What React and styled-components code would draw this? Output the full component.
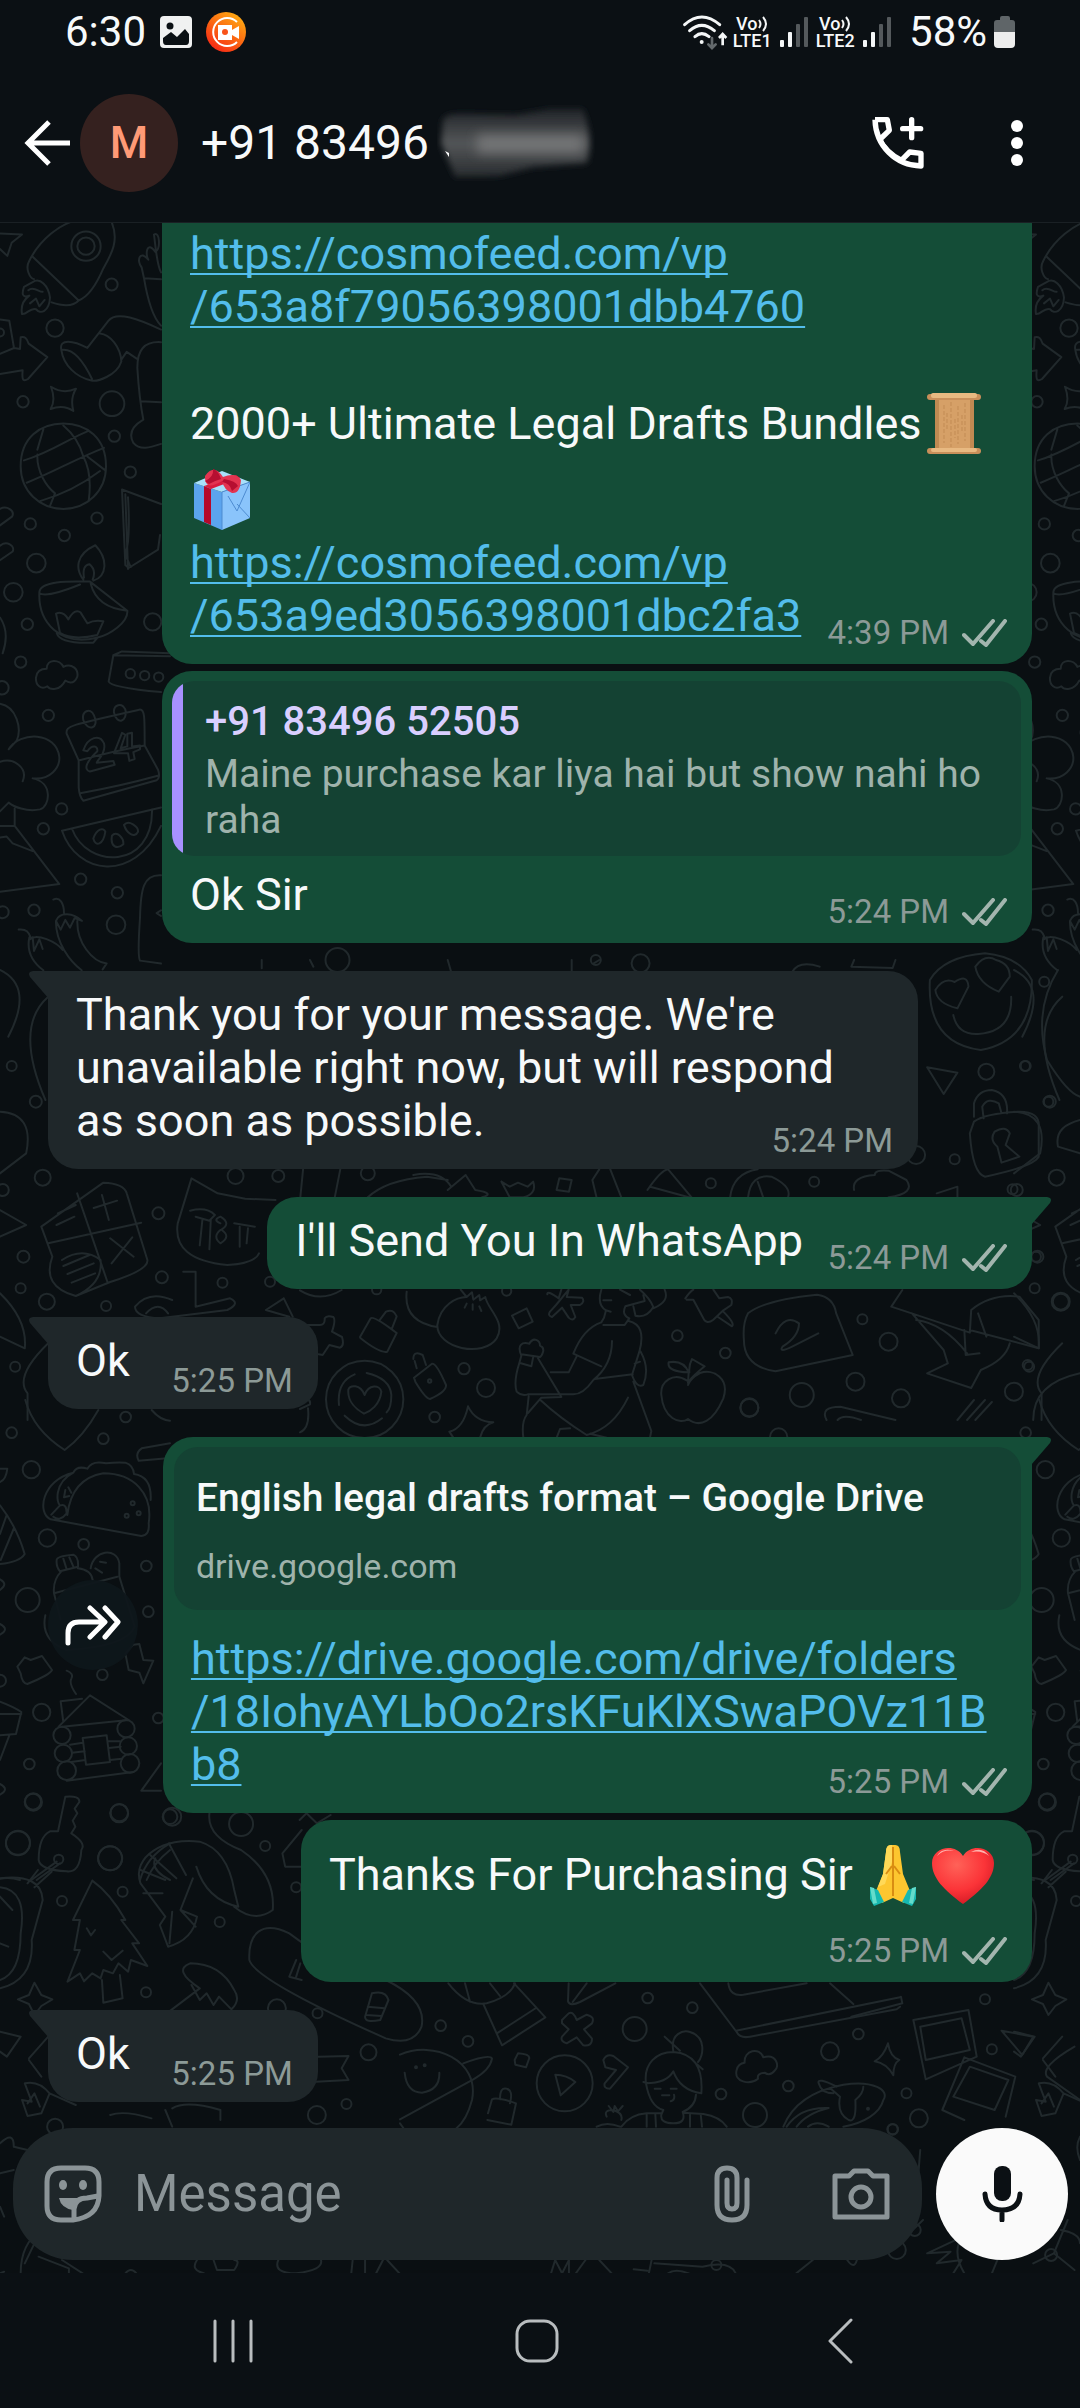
import React from "react";
import styled, { createGlobalStyle } from "styled-components";

const GlobalStyle = createGlobalStyle`
  *, *::before, *::after { box-sizing: border-box; }
  body { margin: 0; background: #0b1014; }
  button { border: 0; padding: 0; background: none; color: inherit; font: inherit; cursor: pointer; }
  svg { display: block; flex: none; }
`;

const Screen = styled.div`
  display: flex;
  flex-direction: column;
  min-height: 100vh;
  background: #0b1014;
  color: #f7f9fa;
  font-family: Roboto, "Liberation Sans", sans-serif;
`;

/* ---------- status bar ---------- */

const StatusBar = styled.div`
  display: flex;
  align-items: center;
  justify-content: space-between;
  height: 64px;
  padding: 0 65px;
  font-size: 42px;
  line-height: 48px;
`;

const StatusGroup = styled.div`
  display: flex;
  align-items: center;
  gap: ${(p) => p.$gap}px;
`;

const Carrier = styled.div`
  display: flex;
  flex-direction: column;
  align-items: center;
  font-size: 18px;
  font-weight: 500;
  line-height: 17px;
`;

const CarrierTop = styled.span`
  display: flex;
  align-items: center;
  gap: 1px;
`;

/* ---------- chat header ---------- */

const Header = styled.header`
  display: flex;
  align-items: center;
  height: 159px;
  padding: 0 55px 0 22px;
  border-bottom: 1px solid #1a2024;
`;

const IconButton = styled.button`
  display: flex;
  align-items: center;
  justify-content: center;
  width: ${(p) => p.$w || 60}px;
  height: ${(p) => p.$h || 80}px;
  flex: none;
`;

const Avatar = styled.div`
  display: flex;
  align-items: center;
  justify-content: center;
  width: 98px;
  height: 98px;
  margin-left: 8px;
  border-radius: 50%;
  background: #35211f;
  color: #ff9a76;
  font-size: 44px;
  font-weight: 500;
`;

const ContactName = styled.h1`
  display: flex;
  align-items: center;
  flex: 1;
  gap: 8px;
  margin: 0 0 0 23px;
  font-size: 48px;
  font-weight: 400;
  line-height: 56px;
  white-space: nowrap;
`;

const HeaderActions = styled.div`
  display: flex;
  align-items: center;
  gap: 81px;
`;

/* ---------- conversation ---------- */

const Chat = styled.main`
  position: relative;
  display: flex;
  flex: 1;
  flex-direction: column;
  justify-content: space-between;
  overflow: hidden;
  background: #0a0f12;
`;

const WallpaperSvg = styled.svg`
  position: absolute;
  inset: 0;
  width: 100%;
  height: 100%;
  fill: none;
  stroke: #21292c;
  stroke-width: 2;
  stroke-linecap: round;
  stroke-linejoin: round;
`;

const Messages = styled.div`
  position: relative;
  display: flex;
  flex-direction: column;
  padding: 0 48px 24px;
`;

const Row = styled.div`
  display: flex;
  align-items: center;
  justify-content: ${(p) => (p.$out ? "flex-end" : "flex-start")};
  gap: 25px;
  margin-top: ${(p) => p.$space}px;
`;

const Bubble = styled.article`
  position: relative;
  display: flex;
  flex-direction: column;
  width: ${(p) => (p.$wide ? "calc(100% - 114px)" : "auto")};
  max-width: calc(100% - 114px);
  padding: ${(p) => (p.$rich ? 10 : p.$cut ? 4 : 17)}px 0 ${(p) => (p.$out ? 11 : 8)}px;
  border-radius: ${(p) => (p.$cut ? "0 0 30px 30px" : "30px")};
  ${(p) => p.$tail && (p.$out ? "border-top-right-radius: 0;" : "border-top-left-radius: 0;")}
  background: ${(p) => (p.$out ? "#144d37" : "#1f272a")};
`;

const TailSvg = styled.svg`
  position: absolute;
  top: 0;
  ${(p) => (p.$out ? "right: -19px; transform: scaleX(-1);" : "left: -19px;")}
  fill: ${(p) => (p.$out ? "#144d37" : "#1f272a")};
`;

const Text = styled.p`
  margin: ${(p) => p.$top || 0}px 28px 0;
  font-size: 45px;
  line-height: 53px;
`;

const EmojiLine = styled.span`
  display: block;
  line-height: 75px;
  white-space: ${(p) => (p.$nowrap ? "nowrap" : "normal")};

  svg {
    display: inline-block;
    margin: 0 ${(p) => p.$edge || 0}px 0 4px;
    vertical-align: -16px;
  }
`;

const MetaSpace = styled.span`
  display: inline-block;
  width: ${(p) => (p.$out ? 201 : 160)}px;
`;

const Link = styled.a`
  color: #53bdeb;
  text-decoration: underline;
  text-decoration-thickness: 2px;
  text-underline-offset: 4px;
  text-decoration-skip-ink: none;
`;

const Meta = styled.footer`
  display: flex;
  align-items: center;
  justify-content: flex-end;
  gap: 13px;
  margin-top: ${(p) => (p.$below ? 19 : p.$out ? -29 : -26)}px;
  padding-right: 25px;
  color: #8c9a97;
  font-size: 33px;
  line-height: 40px;
`;

const Quote = styled.blockquote`
  margin: 0 11px 0 10px;
  padding: 17px 24px 13px 33px;
  border-radius: 22px;
  background: linear-gradient(to right, #a791ff 11px, #144233 11px);
`;

const QuoteName = styled.div`
  color: #d9cfff;
  font-size: 40px;
  font-weight: 500;
  line-height: 47px;
`;

const QuoteText = styled.p`
  margin: 6px 0 0;
  color: #9fb3ac;
  font-size: 39px;
  line-height: 46px;
`;

const Preview = styled.div`
  margin: 0 11px;
  padding: 28px 22px 24px;
  border-radius: 24px;
  background: #144233;
`;

const PreviewTitle = styled.div`
  font-size: 39px;
  font-weight: 500;
  line-height: 46px;
`;

const PreviewHost = styled.div`
  margin-top: 25px;
  color: #9fb3ac;
  font-size: 34px;
  line-height: 40px;
`;

const ForwardButton = styled.button`
  display: flex;
  align-items: center;
  justify-content: center;
  width: 90px;
  height: 90px;
  border-radius: 50%;
  background: #0e161bee;
`;

/* ---------- composer ---------- */

const Composer = styled.form`
  position: relative;
  display: flex;
  gap: 14px;
  margin: 0;
  padding: 0 12px 13px 13px;
`;

const Field = styled.div`
  display: flex;
  flex: 1;
  align-items: center;
  min-width: 0;
  height: 132px;
  padding: 0 31px 0 30px;
  border-radius: 60px;
  background: #1f272a;
  color: #8b9497;
`;

const MessageInput = styled.input`
  flex: 1;
  min-width: 0;
  margin: 0 0 0 31px;
  padding: 0;
  border: 0;
  outline: 0;
  background: transparent;
  color: #f7f9fa;
  font-family: inherit;
  font-size: 51px;
  line-height: 60px;

  &::placeholder { color: #8b9497; opacity: 1; }
`;

const FieldActions = styled.div`
  display: flex;
  align-items: center;
  gap: 69px;
`;

const MicButton = styled.button`
  display: flex;
  align-items: center;
  justify-content: center;
  width: 132px;
  height: 132px;
  border-radius: 50%;
  background: #fafafa;
`;

/* ---------- system navigation ---------- */

const NavBar = styled.nav`
  display: flex;
  align-items: center;
  height: 135px;
  padding: 0 88px 0 81px;
`;

const NavButton = styled.button`
  display: flex;
  flex: 1;
  align-items: center;
  justify-content: center;
  height: 100%;
`;

/* ---------- wallpaper drawings ---------- */

const leftArt = [
  {
    at: [0, 220], scale: [1 / 3, 0.4847],
    d: `M0 28L66 30L35 47L22 74L0 60 M88 84C120 40 180 8 232 0H332C360 40 335 70 310 100C285 140 260 160 236 166L98 76
      M88 84C74 100 90 120 102 122 M236 166C220 178 190 178 155 170 M98 128C120 118 145 135 150 160C148 190 120 195 108 184C90 180 80 196 66 194C60 170 80 160 88 156C64 162 66 150 72 138Z M85 145C100 135 120 150 128 148M90 172L108 162L118 178L134 165
      M483 108C470 92 466 50 462 30C480 22 482 60 466 66C440 40 435 72 445 82C420 60 408 84 425 98L432 120Q450 195 483 218 M432 120L483 122
      M0 205L28 208L42 264L60 266L62 242C75 240 80 244 86 255L142 283L84 328C66 336 66 325 68 310L0 318 M0 276L42 264
      M184 268C176 244 220 248 262 264L325 208C350 186 420 206 483 226 M300 234C330 236 362 262 364 292C350 322 290 334 274 331C230 325 190 300 184 268Q230 262 276 328M364 288L380 272L410 286 
      M153 344Q190 360 228 348Q210 368 220 394Q190 380 152 390Q168 372 153 344 
      M483 252C430 250 412 270 412 305Q418 370 430 412C400 424 384 440 400 460C420 476 450 470 483 462M422 374L483 376
      M62 508C62 450 120 420 190 420C260 420 318 450 318 508C318 560 260 596 190 596C120 596 62 560 62 508 M72 496C150 480 210 450 262 436M80 542C160 520 230 492 312 470M120 580Q220 560 300 518M112 484C110 520 140 550 165 564M190 424Q235 450 250 488C275 520 270 560 266 580M112 474L130 432M262 488L315 516M165 564L150 590
      M366 556L483 586M366 556L376 712L386 718L474 680L480 650M376 566L384 720M384 572Q392 660 376 690L392 716
      M0 596C20 588 46 600 36 612L0 630M0 672C20 660 46 672 38 684L0 702
      M118 770C115 740 240 746 270 746L382 806C385 830 330 856 290 862C180 880 115 830 118 770Q140 780 240 752M272 750Q290 800 382 806M250 742C226 720 226 690 286 671C326 700 320 736 280 744M252 738Q246 712 268 710Q290 722 278 742M168 812Q190 806 205 824Q225 800 242 810L262 832Q285 824 310 828L292 856Q220 868 180 852Z M170 852Q180 875 280 872L292 862
      M0 820Q30 850 8 894 M108 944C110 930 126 926 140 926C140 904 180 906 190 922C215 914 236 926 232 942C220 962 200 952 196 950C180 972 150 970 142 962C124 970 106 960 108 944
      M510 900L340 898L326 952Q330 964 483 974M340 898L366 890L510 894
      M0 998C50 1004 66 1050 50 1074L26 1092C60 1054 170 1055 178 1108C180 1130 150 1156 98 1152C160 1160 150 1210 120 1216C80 1222 40 1210 26 1202L0 1220M0 1118C40 1108 85 1130 68 1158M44 1214V1250L178 1370L0 1386M44 1250L0 1250M0 1274L20 1272L38 1286L98 1302
      M200 1060C196 1044 210 1042 420 1010C434 1010 434 1024 434 1084L474 1134Q482 1150 470 1156L250 1198Q238 1190 236 1170L236 1115L200 1060M236 1115Q350 1094 434 1084M244 1182Q360 1168 476 1146M250 1032C244 1014 270 1004 282 1022C300 1050 262 1056 250 1032M342 1016C340 1000 365 994 376 1010C384 1034 350 1044 342 1016
      M250 1094C264 1066 300 1060 312 1080C320 1100 290 1116 290 1120L340 1116L344 1124L270 1138C250 1134 258 1118 292 1096C294 1084 276 1082 262 1096ZM342 1100L366 1058L376 1062L362 1090L382 1086V1060L396 1058V1086L420 1084V1092L400 1098L404 1112L388 1116L384 1100Z
      M186 1260L483 1212M186 1260C230 1350 400 1370 483 1250M216 1256C260 1340 460 1340 456 1216M280 1276C290 1256 310 1252 316 1262C310 1290 286 1294 280 1276M336 1270C350 1258 372 1276 370 1288C350 1300 330 1292 336 1270M372 1248C386 1236 416 1252 414 1262C404 1276 380 1266 372 1248
      M483 1352C430 1350 422 1380 420 1440Q412 1520 420 1528L483 1534M483 1424L470 1430L483 1436
      M160 1402C180 1396 192 1410 192 1430M168 1446C180 1426 220 1430 246 1446L224 1440L210 1460L196 1444L182 1464L168 1446C166 1490 210 1530 245 1548M232 1446C230 1490 276 1530 320 1534L308 1546M56 1464C80 1462 86 1470 92 1480M90 1484C110 1470 170 1490 188 1506M88 1480Q76 1520 130 1548M98 1480L102 1508L118 1484L128 1504`,
    c: [[258, 54, 44], [258, 54, 26], [335, 133, 18], [165, 223, 26], [69, 375, 17], [336, 379, 37], [343, 446, 17], [391, 520, 17], [291, 615, 17], [91, 627, 17], [193, 651, 17], [109, 708, 28], [40, 768, 28], [82, 834, 17], [458, 829, 26], [62, 912, 17], [391, 936, 14], [434, 940, 14], [476, 943, 14], [145, 1022, 17], [185, 1215, 17], [130, 1256, 17], [242, 1360, 17], [352, 1388, 17], [102, 1424, 17], [348, 1454, 28], [8, 1428, 18], [6, 965, 20], [0, 232, 12]],
  },
  {
    at: [0, 960], scale: [0.6888, 1 / 3],
    d: `M0 30Q50 80 12 230M70 110Q20 200 66 420M0 455Q50 460 38 580L0 640M0 750L38 795L0 830M0 1000Q40 1080 36 1165L0 1130
      M60 800L150 668Q180 670 184 700L214 900Q216 930 160 966L110 1008Q60 980 76 890L60 800M112 700L156 966M70 850L205 788M84 760L110 735M82 795L108 770M136 744L170 722M148 705L158 780M160 835L194 890M192 832L162 910M90 900Q120 860 146 900Q150 970 110 1008M92 918L130 885M98 942L136 910M104 968L138 940
      M258 790L278 655L316 700L356 716L400 720M258 790Q250 900 330 915Q370 910 376 880M276 752Q300 740 312 765L304 782L284 770M294 776L290 856M306 780L304 868M320 790Q308 780 320 770Q336 790 322 808M320 810Q308 830 320 850Q336 830 322 810M340 790L370 800M348 800L348 860M360 805L358 850
      M266 935L284 935V1040L334 1015Q350 1030 330 1050L232 1075Q196 1070 196 1040Q216 990 250 1020M212 1060Q230 1020 244 1060M412 1015L386 1050L420 1070M412 1015L425 1070M70 1150Q20 1250 40 1300V1380`,
    c: [[17, 318, 5], [62, 653, 8], [342, 648, 8], [404, 648, 6], [52, 425, 6], [230, 760, 6], [34, 890, 6], [68, 1025, 8], [154, 1038, 5], [235, 952, 6], [323, 968, 5], [392, 965, 5], [30, 985, 5], [22, 1220, 5], [4, 690, 6]],
  },
  {
    at: [0, 1400], scale: [1 / 3, 1 / 3],
    d: `M76 0Q100 90 194 150Q250 110 295 30M455 30Q480 60 510 62M510 130L425 145Q404 160 416 182L510 174M0 206L22 206Q18 240 0 246
      M152 358C110 340 125 240 220 218Q230 196 262 206Q276 180 318 190Q350 186 376 188Q400 196 402 222Q456 230 452 300M152 358L424 408Q450 406 446 370C460 280 400 220 310 220Q215 236 202 345M220 218C160 250 170 310 180 316L154 344M182 316Q200 310 200 340Q180 366 160 350M196 270L192 292L208 288M205 262L214 278
      M0 316Q50 380 74 462Q60 486 0 492M20 345L0 402M42 384L2 480M0 538Q26 552 0 570M0 672Q30 688 0 704
      M170 480Q170 468 220 464Q236 470 234 500L180 514Q168 500 170 480M190 476L200 508M208 472L220 500M184 514Q158 540 162 580L182 660M162 580L352 530M234 505Q274 510 278 540M272 505C280 450 350 440 358 490V530L404 680Q380 740 200 750Q120 720 136 646M300 485L318 488M286 505L306 518
      M60 790L74 772L92 780L126 768L156 810Q150 824 82 852Q66 850 62 820L52 800Z M400 734L418 732L430 780L460 782L430 850L418 818L386 810L376 760Z M200 812Q222 820 214 836Q206 850 228 882
      M0 905Q40 920 64 936L48 1002L0 1006M0 942H64M28 1006L0 1080 M182 904L246 896M182 904L190 966M176 980L270 886L386 960L186 980M210 1034L248 1028M216 1058L254 1054M214 1086L256 1080M248 1014L320 1006L330 1086L258 1094ZM324 1024H360M326 1044L362 1040M330 1080L366 1076M200 1142L400 1116M483 1090L424 1172H483M0 1152Q30 1168 0 1184
      M174 1294L196 1190Q240 1186 238 1206L224 1226L232 1240L218 1262L226 1280L214 1300Q260 1330 244 1350Q240 1420 200 1414Q120 1410 116 1380Q116 1310 150 1294L174 1294M170 1385L94 1440M180 1390L110 1440M0 1436Q30 1430 60 1440M510 1330Q440 1370 420 1440M440 1440Q460 1390 510 1350M466 1375Q450 1410 510 1440`,
    c: [[35, 98, 16], [377, 51, 16], [310, 116, 16], [94, 209, 26], [142, 414, 26], [251, 433, 16], [439, 498, 16], [83, 600, 36], [445, 635, 16], [307, 824, 16], [125, 937, 26], [186, 1006, 26], [190, 1060, 26], [200, 1112, 28], [378, 986, 26], [385, 1038, 26], [390, 1090, 28], [88, 1092, 16], [100, 1206, 26], [358, 1238, 26], [54, 1328, 36], [330, 1375, 36], [176, 1378, 14], [475, 954, 16], [510, 1250, 22], [0, 842, 18], [398, 310, 6], [416, 340, 6], [380, 347, 6]],
  },
  {
    at: [0, 1800], scale: [0.6888, 1 / 3],
    d: `M55 210L40 250M75 215L50 262M0 235Q60 220 62 300L46 420Q50 540 0 565M0 262Q40 270 30 400Q30 520 0 540M0 290L18 330M0 430L12 440
      M134 242L106 360H116L108 450H116L98 545L116 520L122 544L134 520L146 535L150 510L164 520L172 490L186 515L190 480L214 498L192 430H202L176 360H182Q160 280 134 242M148 540L150 608L178 595L174 525M126 385L132 406L138 390M150 455L162 480L178 452
      M204 250C190 170 240 110 290 125Q330 150 340 270L346 320Q300 300 285 200M204 210L240 240M218 165L256 235M245 130L270 225M204 250L240 350L232 375L244 440Q280 420 286 350L262 330L280 235M250 335L246 430M262 330L284 380M208 280L236 280
      M304 40Q300 110 350 150Q400 220 396 330Q370 370 340 320M438 90L410 160L414 200H438M435 60L445 40L460 70L480 45
      M440 430L420 400C380 360 360 400 362 480Q370 540 560 715Q600 740 612 680Q620 600 560 540L540 540M430 480L420 530L438 540M436 490L430 530M540 580Q560 570 564 600L552 660Q530 670 530 650ZM534 620L558 625M532 645L554 648
      M246 634L290 565Q250 510 276 490Q320 490 340 570Q350 600 336 628L318 590L310 615L300 580L290 600L278 555M50 548L60 585L76 598L60 618L50 645L42 612L26 598L42 585ZM0 695L30 710L10 770L0 755
      M42 775L70 710M42 780L60 830M36 850Q56 840 72 880L60 940L40 948L32 900L46 905ZM40 910L50 880L58 920M72 880L110 915M250 925Q270 900 320 930V960M160 945Q180 930 220 955
      M462 770L506 768L496 805L506 840L452 846`,
    c: [[48, 5, 8], [173, 40, 9], [250, 50, 9], [350, 72, 12], [26, 130, 12], [160, 175, 12], [385, 138, 5], [430, 262, 5], [178, 275, 5], [90, 303, 5], [319, 366, 5], [212, 577, 5], [402, 625, 9], [461, 640, 5], [535, 757, 8], [503, 912, 5], [460, 945, 9]],
  },
];

const centerArt = [
  {
    at: [0, 960], scale: [0.6888, 1 / 3],
    d: `M1350 60Q1345 250 1424 270Q1500 240 1498 60Q1480 -10 1430 -20Q1370 -10 1350 60M1358 90Q1370 50 1386 66Q1405 40 1406 80L1390 145Q1360 130 1358 90M1416 20Q1430 -20 1446 0Q1466 10 1466 50L1450 95Q1420 70 1416 20M1384 165Q1390 225 1420 222Q1470 215 1468 110
      M1346 322L1390 338L1370 402ZM1414 470V430Q1420 390 1440 390Q1464 400 1462 460M1428 475L1426 440Q1434 410 1450 430L1454 460M1408 520L1414 485Q1430 460 1480 455Q1510 455 1508 500L1508 590Q1500 620 1430 650Q1412 640 1408 520M1448 560Q1436 540 1444 515Q1460 495 1466 520L1460 555L1480 590L1454 608ZM1536 30Q1500 150 1520 300Q1550 400 1568 410M1568 480Q1530 500 1536 560L1568 580
      M440 628L436 712M494 628L486 712M534 712Q560 660 620 650L650 660M600 645Q640 630 655 680M650 690L676 645L690 690Q720 700 700 712M728 665L740 680L752 668L766 680L774 665Q780 700 760 712H740L728 665M812 655L830 660L826 695L808 690ZM870 628L860 660L866 712M886 628L902 712M940 690Q960 630 970 628L1004 712M944 680L1000 712M1060 712Q1064 640 1100 628M1086 712Q1090 640 1120 650Q1150 680 1144 712M1100 665L1108 712M1240 690Q1236 650 1270 645Q1270 628 1290 632L1316 660Q1330 700 1290 712M1360 700L1390 680V712
      M1086 1060Q1110 1020 1186 1004Q1210 1010 1214 1060L1238 1185L1126 1234Q1080 1220 1080 1140Q1078 1090 1086 1060M1126 1120Q1140 1060 1160 1090Q1160 1130 1136 1160Q1130 1180 1150 1160L1188 1120
      M1310 990L1294 1040L1408 1118L1410 1050Q1440 1000 1480 1010L1508 1080V1165L1408 1110M1324 1060L1370 1170L1376 1210L1346 1240L1410 1284L1424 1230Q1460 1200 1466 1150M1420 1060L1432 1130M1400 1110L1402 1185L1422 1180M1330 1080Q1370 1090 1404 1180M1500 1380Q1500 1270 1568 1240M1390 1380L1414 1320M1404 1380L1430 1320M1416 1380L1440 1326
      M1200 1380Q1190 1340 1220 1340L1300 1380M1216 1380Q1224 1360 1250 1380M450 0L455 20M380 0V25M650 0L655 36M830 0V36M870 0L862 10M1150 36Q1160 0 1190 20M1240 0L1236 20L1296 24L1300 0`,
    c: [[1516, 65, 5], [1432, 335, 8], [1488, 318, 5], [1522, 425, 5], [1386, 598, 5], [1330, 585, 9], [1032, 670, 5], [1182, 665, 5], [1470, 688, 5], [1504, 890, 5], [1290, 1145, 9], [1252, 1078, 5], [1242, 1265, 9], [1308, 1315, 9], [1164, 1305, 12], [1088, 1342, 9], [1472, 1295, 9], [1492, 1215, 5], [1540, 1025, 9], [490, 0, 12], [930, 10, 9], [865, 0, 5], [534, 640, 7]],
  },
  {
    at: [300, 1285], scale: [1 / 3, 1 / 3],
    d: `M20 120H56Q76 122 74 100Q80 90 100 96Q108 104 96 140L126 156Q134 182 120 188L88 180L68 210L56 208M180 156L212 100Q220 90 290 144L262 200Q240 206 182 160ZM240 104L258 80Q280 70 290 94L276 130M0 16Q60 54 125 15
      M320 20Q310 110 412 126M412 120C420 60 470 36 500 36L482 14M500 36L516 22L520 44L538 30L540 46L556 36C560 70 620 110 590 160C550 220 410 190 412 120M500 56L494 68M518 58V74M538 64L544 78
      M636 92L680 70L698 110L656 130ZM742 28Q740 14 776 40L784 14M806 14L800 36L846 38Q856 50 840 60H812L826 96Q818 110 806 98L786 68L756 96Q742 92 750 80L768 60Z
      M904 14Q890 60 918 76L912 98L904 112M910 46H934M918 76L932 80M1030 30L1034 48L976 64Q964 90 988 100L974 120H910M1000 64L1006 90M1020 14Q1050 40 1060 66Q1040 100 1006 92M1094 14Q1110 50 1060 70M960 14L990 30
      M904 112Q850 130 820 206L904 244M936 168Q936 240 880 285Q850 328 820 328L684 328M830 214L806 262H752M884 282L998 268M986 108Q1040 120 1018 200L996 270Q1010 310 1030 300Q1050 250 1022 200M1020 230L1004 236M658 234Q640 290 650 320Q664 334 684 328M658 234L664 212M664 212C650 180 666 170 688 176C700 154 720 166 720 182C740 190 724 214 720 216L664 208M700 214L694 244L660 234M714 220L784 336L724 338L684 384M686 334L680 390Q664 410 670 458M722 346Q780 400 860 450Q940 430 984 338M1000 290L1054 438L1050 458M770 458L780 432L810 430M870 446L920 458
      M1156 40Q1170 20 1180 14M1160 44H1180L1210 100Q1220 120 1240 104L1270 76L1294 60Q1300 40 1284 36L1258 40L1240 14M1254 96L1296 124Q1306 116 1270 80
      M1166 262Q1100 260 1106 232Q1150 224 1166 262L1164 294Q1170 280 1214 244L1176 222Q1166 240 1168 262M1160 286C1120 260 1080 290 1084 330C1090 400 1140 420 1164 402C1200 430 1240 410 1270 340C1290 280 1240 250 1200 264Q1170 280 1164 300
      M340 222Q340 196 368 210L378 240M350 250L344 228M342 278L396 236Q410 234 438 300Q440 320 390 342Q376 340 346 290ZM504 364Q526 410 580 412Q550 420 540 458M504 364Q490 430 448 440L460 458M145 314C150 300 180 296 194 330C206 296 240 300 244 320C240 360 210 380 192 386C170 374 142 350 145 314M117 360Q110 290 164 268M200 264Q270 280 274 330Q274 370 260 382M134 392Q190 446 246 400M0 350Q34 336 30 358L0 372M24 370Q30 430 0 442`,
    c: [[194, 343, 116], [492, 251, 17], [558, 309, 27], [404, 396, 16], [389, 288, 5], [1132, 152, 16], [1276, 204, 16], [1348, 369, 27], [230, 14, 14], [620, 18, 14], [1436, 456, 26]],
  },
  {
    at: [400, 1980], scale: [1 / 3, 1 / 3],
    d: `M145 10Q200 80 260 70Q330 50 345 10M195 10L210 65M270 10L300 48M250 72L306 196L436 112L342 10M294 158L408 84M506 10L504 64Q510 80 540 66L646 10M518 66L560 10
      M486 120L506 100Q520 92 530 120L560 104Q586 110 576 130L552 148L576 176Q576 200 550 196L530 172L500 190Q480 184 486 170L506 148L486 130Z
      M900 10L1010 156Q1020 176 1050 170L1490 88L1500 80M1008 152L1500 52M985 10Q990 50 1030 44L1220 10M1290 10L1360 72
      M0 224C100 180 240 240 216 360Q200 420 170 444M190 250Q270 220 276 236Q270 270 220 298L0 418M14 278Q20 338 66 338Q120 330 118 278M0 430L10 444
      M344 240L354 220Q388 222 388 234L378 262L346 254ZM466 284Q500 284 526 306L482 346ZM610 240Q620 220 640 228L684 262L630 326Q610 326 614 310L648 270L616 262Z M264 400L276 358Q290 350 348 370L334 434L262 420M300 358Q300 320 320 326Q340 330 330 370
      M820 214C810 160 850 150 870 156C920 170 910 230 894 246M794 170L840 212M738 310C730 250 770 216 820 216C880 220 910 260 904 340Q840 330 820 274Q800 310 738 310Q750 380 790 390L784 404Q780 430 820 430Q860 430 848 396Q886 380 888 344M764 326H782M812 326H830M786 346H808M812 364Q826 360 822 344M890 252L908 268M730 306L744 310M784 400H740Q690 404 664 440M850 398L910 402Q960 410 980 440M740 404V440M766 404L768 440M870 402V440M902 402L906 440
      M1010 270Q1014 250 1034 248C1030 210 1080 200 1090 232C1130 220 1140 260 1124 272Q1110 290 1094 278Q1070 280 1074 296C1050 316 1000 306 1010 270 M1150 440Q1190 340 1330 314C1420 300 1470 330 1450 360C1440 400 1390 430 1330 440M1256 310Q1250 290 1310 320M1256 310Q1264 340 1300 340M1390 320Q1390 340 1366 360Q1370 430 1346 420Q1310 400 1320 350L1290 324M1160 440Q1200 380 1286 384Q1220 400 1190 440M1224 440Q1250 420 1286 440M620 410Q610 390 640 390Q670 400 664 420M626 378L640 396L644 378L654 394L668 378M590 440Q620 424 660 440M1464 190Q1470 230 1498 240Q1480 250 1480 286Q1460 250 1424 244Q1450 230 1464 190`,
    c: [[122, 137, 16], [204, 184, 16], [494, 310, 84], [704, 147, 36], [743, 54, 16], [877, 83, 16], [963, 342, 16], [1065, 405, 36], [1290, 214, 27], [1375, 162, 16], [1165, 318, 16], [1478, 448, 16], [48, 262, 3], [74, 256, 3], [1404, 386, 3]],
  },
  {
    at: [0, 1800], scale: [0.6888, 1 / 3],
    d: `M1308 590L1310 610L1236 650M1326 660L1406 630L1418 770L1344 838ZM1336 680L1396 655L1408 750L1344 780ZM1400 772L1474 830L1460 950M1400 772L1368 930L1400 960M1408 800L1464 840L1444 930L1384 890ZM1454 692L1500 710L1484 765ZM1560 740Q1510 800 1520 830L1568 900`,
    c: [[1430, 598, 5], [1440, 748, 5], [1316, 880, 5], [1334, 955, 9]],
  },
  {
    at: [0, 2110], scale: [0.6888, 1 / 3],
    d: `M0 290L6 320M0 490L6 485M30 490Q30 400 60 360M36 460L50 400M56 440L100 475V490M90 450L120 490M182 490Q190 470 198 490M286 450Q276 480 296 490M310 450L315 480L340 480Q350 450 340 450M404 450Q396 490 430 490Q470 480 466 450M512 450L510 490M530 450V490M546 490L556 450M562 450L580 490M800 490L806 450L816 490L826 450V490M850 450L836 490M870 450L888 490M920 478L940 482M946 450L942 490M950 460L1020 470Q1060 450 1068 490M970 490Q980 475 1000 490M1180 450L1156 490M1230 450Q1240 480 1244 450M1336 120L1328 330M1340 330L1320 370M1408 370L1346 430L1380 425L1360 460L1396 450L1384 490M1400 370Q1380 420 1400 490M0 100Q20 60 20 110L40 120M0 190L20 180M240 0L250 50M1450 440L1440 490M1500 460L1530 430L1560 480M1530 430L1550 330M1540 360Q1568 370 1568 400M1568 80Q1560 110 1568 150`,
    c: [[80, 50, 8], [1296, 58, 5], [1302, 420, 9], [1328, 360, 6], [1526, 435, 6], [1040, 465, 5]],
  },
];

function Art({ items }) {
  return items.map((g, i) => (
    <g key={i}>
      <path
        d={g.d}
        transform={`translate(${g.at.join(" ")}) scale(${g.scale.join(" ")})`}
        vectorEffect="non-scaling-stroke"
      />
      {g.c.map(([x, y, r], k) => (
        <circle
          key={k}
          cx={g.at[0] + x * g.scale[0]}
          cy={g.at[1] + y * g.scale[1]}
          r={g.scale[0] < 0.5 ? r / 3 : r}
        />
      ))}
    </g>
  ));
}

function Wallpaper() {
  return (
    <WallpaperSvg viewBox="0 223 1080 2050" preserveAspectRatio="xMidYMin slice" aria-hidden="true">
      <g id="doodle-column"><Art items={leftArt} /></g>
      <use href="#doodle-column" x="1014" />
      <Art items={centerArt} />
    </WallpaperSvg>
  );
}

/* ---------- icons ---------- */

const Wifi = () => (
  <svg width="46" height="36" viewBox="0 0 138 108" fill="none" stroke="#f4f6f7" strokeWidth="9" strokeLinecap="round">
    <path d="M5 32Q56-14 110 32M20 50Q56 18 94 50M36 68Q56 50 78 68" />
    <circle cx="56" cy="84" r="6" fill="#f4f6f7" stroke="none" />
    <path d="M87 72V100M76 91L87 102L98 91" stroke="#63696c" strokeWidth="8" />
    <path d="M119 94V62M108 72L119 60L130 72" strokeWidth="8" strokeLinecap="butt" />
  </svg>
);

const Signal = () => (
  <svg width="28" height="30" viewBox="0 0 28 30">
    <rect x="0" y="23" width="4" height="7" rx="1" fill="#f4f6f7" />
    <rect x="8" y="15" width="4" height="15" rx="1" fill="#f4f6f7" />
    <rect x="16" y="7" width="4" height="23" rx="1" fill="#54595c" />
    <rect x="24" y="0" width="4" height="30" rx="1" fill="#54595c" />
  </svg>
);

const CarrierLabel = ({ n }) => (
  <Carrier>
    <CarrierTop>
      Vo
      <svg width="10" height="16" viewBox="0 0 10 16" fill="none" stroke="#f4f6f7" strokeWidth="2">
        <path d="M1 4Q4 8 1 12M5 1Q11 8 5 15" />
      </svg>
    </CarrierTop>
    <span>LTE{n}</span>
  </Carrier>
);

const Checks = () => (
  <svg width="45" height="28" viewBox="0 0 45 28" fill="none" stroke="#a3b5ae" strokeWidth="4" strokeLinecap="round" strokeLinejoin="round">
    <path d="M2 16L11 25L31 2" />
    <path d="M19 22L24 26L43 2" />
  </svg>
);

const Tail = ({ out }) => (
  <TailSvg $out={out} width="20" height="28" viewBox="0 0 20 28"><path d="M20 0H4Q-2 1 1 6L20 28Z" /></TailSvg>
);

const Scroll = () => (
  <svg width="56" height="62" viewBox="0 0 56 62" role="img" aria-label="scroll">
    <path d="M9 5H48V57H9Z" fill="#d6a067" />
    <path d="M9 5H13V57H9ZM44 5H48V57H44Z" fill="#c08a52" />
    <path d="M18 12V50M25 9V54M32 13V51M39 10V48M21 20V38M29 26V45M36 22V40" stroke="#c28b54" strokeDasharray="4 2" />
    <rect x="1" y="1" width="54" height="6" rx="3" fill="#c98f5a" />
    <rect x="5" y="0" width="46" height="5" rx="2" fill="#e8b981" />
    <rect x="1" y="55" width="54" height="6" rx="3" fill="#c98f5a" />
    <rect x="5" y="55" width="46" height="4" rx="2" fill="#e8b981" />
  </svg>
);

const Gift = () => (
  <svg width="56" height="62" viewBox="0 0 56 62" role="img" aria-label="gift">
    <path d="M0 15L28 24V62L0 50Z" fill="#5ba4ee" />
    <path d="M28 24L56 14V50L28 62Z" fill="#8ac4fb" />
    <path d="M0 15L28 3L56 14L28 24Z" fill="#a9e0fa" />
    <path d="M28 62V24L56 14L43 43L34 28M43 36L56 50" fill="none" stroke="#4d8bd0" />
    <path d="M10 18L17 21V57L10 54Z" fill="#b5092b" />
    <path d="M10 18L42 7L46 10L17 21Z" fill="#d91b3d" />
    <path d="M28 13Q10 24 11 8Q20-5 29 9Q42 4 47 12Q46 26 38 25Q30 22 28 13Z" fill="#e23450" />
    <path d="M19 1Q24 2 27 11Q20 13 15 16L11 13Q20 9 19 1ZM30 11Q42 13 44 18L38 23Q36 15 28 14Z" fill="#b60f31" />
  </svg>
);

const Pray = () => (
  <svg width="50" height="62" viewBox="0 0 50 62" role="img" aria-label="folded hands">
    <path d="M24 1Q18 0 18 8L15 30L8 47L14 59L25 54L36 59L42 47L35 30L32 8Q32 0 26 1Z" fill="#fdc62f" />
    <path d="M24 1Q18 0 18 8L15 30L10 43L17 40L24 18Z" fill="#ffd957" />
    <path d="M25 3V52M18 30L24 22M32 30L26 22" stroke="#d98c12" strokeWidth="2" fill="none" />
    <path d="M2 43L10 46L16 58L6 62L2 55ZM48 43L40 46L34 58L44 62L48 55Z" fill="#16b8b0" />
    <path d="M2 43L6 44L9 59L5 60ZM48 43L44 44L41 59L45 60Z" fill="#65dccb" />
  </svg>
);

const Heart = () => (
  <svg width="62" height="62" viewBox="0 0 62 62" role="img" aria-label="red heart">
    <defs>
      <radialGradient id="heart" cx=".4" cy=".3" r=".75">
        <stop offset="0" stopColor="#ff6258" />
        <stop offset=".6" stopColor="#fb3438" />
        <stop offset="1" stopColor="#d31824" />
      </radialGradient>
    </defs>
    <path d="M31 60C12 46 0 34 0 19C0 4 22-2 31 12C40-2 62 4 62 19C62 34 50 46 31 60Z" fill="url(#heart)" />
    <path d="M5 12Q10 3 22 7Q12 5 5 12ZM39 8Q50 2 57 12Q50 6 39 8Z" fill="#ffb3ae" />
  </svg>
);

const Smudge = () => (
  <svg width="158" height="76" viewBox="0 0 158 76" aria-hidden="true">
    <defs>
      <filter id="soft" x="-10%" y="-20%" width="120%" height="140%"><feGaussianBlur stdDeviation="3" /></filter>
      <filter id="softer" x="-10%" y="-60%" width="120%" height="220%"><feGaussianBlur stdDeviation="6" /></filter>
      <linearGradient id="fog" x1="0" y1="0" x2="0" y2="1">
        <stop offset="0" stopColor="#202428" />
        <stop offset=".5" stopColor="#545658" />
        <stop offset="1" stopColor="#282c2f" />
      </linearGradient>
    </defs>
    <path d="M6 14Q10 8 30 9L80 10L112 4H146Q156 30 150 58L96 62L62 71L18 72L4 38Z" fill="url(#fog)" filter="url(#soft)" />
    <path d="M40 30H146V48H40Z" fill="#737576" filter="url(#softer)" />
    <path d="M8 46L12 52V48Z" fill="#fff" />
  </svg>
);

/* ---------- page ---------- */

function Message({ out, tail, wide, rich, cut, below, space = 28, time, side, children }) {
  return (
    <Row $out={out} $space={space}>
      {side}
      <Bubble $out={out} $tail={tail} $wide={wide} $rich={rich} $cut={cut}>
        {tail && <Tail out={out} />}
        {children}
        <Meta $below={below} $out={out}>
          <time>{time}</time>
          {out && <Checks />}
        </Meta>
      </Bubble>
    </Row>
  );
}

export default function App() {
  return (
    <Screen>
      <GlobalStyle />
      <StatusBar>
        <StatusGroup $gap={14}>
          <span>6:30</span>
          <svg width="32" height="32" viewBox="0 0 32 32">
            <rect width="32" height="32" rx="4" fill="#f0f1f1" />
            <circle cx="10" cy="10" r="3.5" fill="#0b1014" />
            <path d="M3 25V22L11 16L17 21L25 13L29 18V25Q29 29 26 29H6Q3 29 3 25Z" fill="#0b1014" />
          </svg>
          <svg width="40" height="40" viewBox="0 0 40 40">
            <defs>
              <linearGradient id="recorder" x1=".1" y1="1" x2=".8" y2="0">
                <stop offset="0" stopColor="#f51c16" />
                <stop offset=".5" stopColor="#fb6412" />
                <stop offset="1" stopColor="#ffb012" />
              </linearGradient>
            </defs>
            <circle cx="20" cy="20" r="20" fill="url(#recorder)" />
            <path d="M31 10A14 14 0 1 0 31 30" fill="none" stroke="#fff" strokeWidth="2" />
            <path d="M12 13H26V18L33 14V27L26 23V28H12Z" fill="#fff" />
            <circle cx="19" cy="20" r="3" fill="#f9531a" />
          </svg>
        </StatusGroup>
        <StatusGroup $gap={8}>
          <StatusGroup $gap={4}><Wifi /><CarrierLabel n="1" /></StatusGroup>
          <Signal />
          <CarrierLabel n="2" />
          <Signal />
          <StatusGroup $gap={7}>
            <span>&nbsp;58%</span>
            <svg width="21" height="32" viewBox="0 0 21 32">
              <path d="M6 4V2Q6 0 8 0H14Q16 0 16 2V4H18Q21 4 21 7V16H0V7Q0 4 3 4Z" fill="#5f6568" />
              <path d="M0 16H21V28Q21 32 17 32H4Q0 32 0 28Z" fill="#ededed" />
            </svg>
          </StatusGroup>
        </StatusGroup>
      </StatusBar>

      <Header>
        <IconButton $w={50} aria-label="Back">
          <svg width="46" height="46" viewBox="0 0 46 46" fill="none" stroke="#fff" strokeWidth="5">
            <path d="M46 23H4M25 2L4 23L25 44" />
          </svg>
        </IconButton>
        <Avatar>M</Avatar>
        <ContactName>+91 83496<Smudge /></ContactName>
        <HeaderActions>
          <IconButton aria-label="Call">
            <svg width="52" height="52" viewBox="820 354 156 156" fill="none" stroke="#fff" strokeWidth="16" strokeLinejoin="round">
              <path d="M829 362H866L872 394L845 420M829 362C831 440 890 499 967 501V463L933 459L908 484" />
              <path d="M840 412Q862 460 912 484" strokeWidth="12" />
              <path d="M939 362V416M912 389H966" strokeLinecap="round" />
            </svg>
          </IconButton>
          <IconButton $w={16} aria-label="More options">
            <svg width="12" height="46" viewBox="0 0 12 46" fill="#fff">
              <circle cx="6" cy="6" r="6" /><circle cx="6" cy="23" r="6" /><circle cx="6" cy="40" r="6" />
            </svg>
          </IconButton>
        </HeaderActions>
      </Header>

      <Chat>
        <Wallpaper />
        <Messages>
          <Message out wide cut space={0} time="4:39 PM">
            <Text>
              <Link href="https://cosmofeed.com/vp/653a8f79056398001dbb4760">https://cosmofeed.com/vp<br />/653a8f79056398001dbb4760</Link>
              <br /><br />
              <EmojiLine>2000+ Ultimate Legal Drafts Bundles<Scroll /></EmojiLine>
              <EmojiLine><Gift /></EmojiLine>
              <Link href="https://cosmofeed.com/vp/653a9ed3056398001dbc2fa3">https://cosmofeed.com/vp<br />/653a9ed3056398001dbc2fa3</Link>
            </Text>
          </Message>

          <Message out wide rich space={7} time="5:24 PM">
            <Quote>
              <QuoteName>+91 83496 52505</QuoteName>
              <QuoteText>Maine purchase kar liya hai but show nahi ho raha</QuoteText>
            </Quote>
            <Text $top={12}>Ok Sir</Text>
          </Message>

          <Message tail wide time="5:24 PM">
            <Text>Thank you for your message. We're<br />unavailable right now, but will respond<br />as soon as possible.</Text>
          </Message>

          <Message out tail time="5:24 PM">
            <Text>I'll Send You In WhatsApp<MetaSpace $out /></Text>
          </Message>

          <Message tail time="5:25 PM">
            <Text>Ok<MetaSpace /></Text>
          </Message>

          <Message
            out tail wide rich
            time="5:25 PM"
            side={
              <ForwardButton aria-label="Forward">
                <svg width="56" height="42" viewBox="0 0 56 42" fill="none" stroke="#fff" strokeWidth="5" strokeLinecap="round" strokeLinejoin="round">
                  <path d="M3 39V29Q3 18 14 18H37M25 4L40 18L25 33M40 4L53 18L40 33" />
                </svg>
              </ForwardButton>
            }
          >
            <Preview>
              <PreviewTitle>English legal drafts format – Google Drive</PreviewTitle>
              <PreviewHost>drive.google.com</PreviewHost>
            </Preview>
            <Text $top={22}>
              <Link href="https://drive.google.com/drive/folders/18IohyAYLbOo2rsKFuKlXSwaPOVz11Bb8">
                https://drive.google.com/drive/folders<br />/18IohyAYLbOo2rsKFuKlXSwaPOVz11B<br />b8
              </Link>
            </Text>
          </Message>

          <Message out below space={7} time="5:25 PM">
            <Text><EmojiLine $nowrap $edge={10}>Thanks For Purchasing Sir <Pray /><Heart /></EmojiLine></Text>
          </Message>

          <Message tail time="5:25 PM">
            <Text>Ok<MetaSpace /></Text>
          </Message>
        </Messages>

        <Composer onSubmit={(e) => e.preventDefault()}>
          <Field>
            <IconButton type="button" aria-label="Stickers">
              <svg width="58" height="58" viewBox="0 0 58 58" fill="none" stroke="currentColor" strokeWidth="5" strokeLinejoin="round">
                <path d="M55 31V17Q55 3 41 3H17Q3 3 3 17V41Q3 55 17 55H29Q54 52 55 31Z" />
                <path d="M30 54V44Q31 33 43 33L54 31" />
                <ellipse cx="19" cy="20" rx="4" ry="5" fill="currentColor" stroke="none" />
                <ellipse cx="39" cy="20" rx="4" ry="5" fill="currentColor" stroke="none" />
                <path d="M15 33H38Q30 36 29 45Q17 43 15 33Z" fill="currentColor" stroke="none" />
              </svg>
            </IconButton>
            <MessageInput aria-label="Message" placeholder="Message" />
            <FieldActions>
              <IconButton type="button" aria-label="Attach">
                <svg width="38" height="58" viewBox="0 0 38 58" fill="none" stroke="currentColor" strokeWidth="5" strokeLinecap="round">
                  <path d="M34 15V40Q34 55 19 55Q4 55 4 40V13Q4 3 14 3Q24 3 24 13V38Q24 44 19 44Q14 44 14 38V15" />
                </svg>
              </IconButton>
              <IconButton type="button" aria-label="Camera">
                <svg width="58" height="52" viewBox="0 0 58 52" fill="none" stroke="currentColor" strokeWidth="5" strokeLinejoin="round">
                  <path d="M3 8H17L22 3H36L41 8H55V49H3Z" />
                  <circle cx="29" cy="29" r="10" />
                </svg>
              </IconButton>
            </FieldActions>
          </Field>
          <MicButton type="button" aria-label="Record voice message">
            <svg width="42" height="56" viewBox="0 0 42 56">
              <rect x="13" y="0" width="17" height="35" rx="8" fill="#0b1014" />
              <path d="M4 28Q5 44 21 44Q38 44 39 28M21 44V54" fill="none" stroke="#0b1014" strokeWidth="5" strokeLinecap="round" />
            </svg>
          </MicButton>
        </Composer>
      </Chat>

      <NavBar aria-label="System">
        <NavButton aria-label="Recents">
          <svg width="42" height="44" viewBox="0 0 42 44" stroke="#b9bdbf" strokeWidth="3" strokeLinecap="round"><path d="M3 2V42M21 2V42M39 2V42" /></svg>
        </NavButton>
        <NavButton aria-label="Home">
          <svg width="44" height="44" viewBox="0 0 44 44" fill="none" stroke="#b9bdbf" strokeWidth="3"><rect x="2" y="2" width="40" height="40" rx="13" /></svg>
        </NavButton>
        <NavButton aria-label="Back">
          <svg width="26" height="46" viewBox="0 0 26 46" fill="none" stroke="#b9bdbf" strokeWidth="3" strokeLinecap="round" strokeLinejoin="round"><path d="M24 2L3 23L24 44" /></svg>
        </NavButton>
      </NavBar>
    </Screen>
  );
}
